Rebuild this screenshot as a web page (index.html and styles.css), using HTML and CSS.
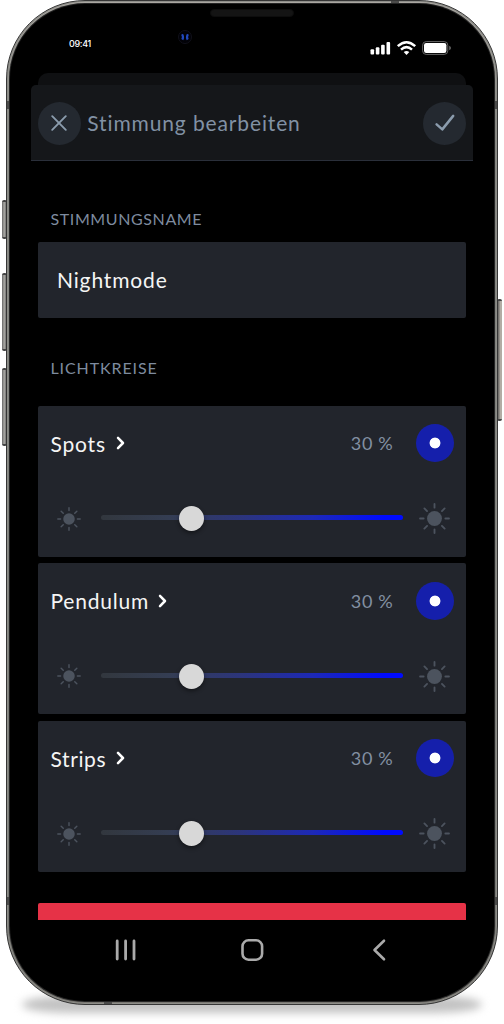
FILE: index.html
```html
<!DOCTYPE html>
<html lang="de">
<head>
<meta charset="utf-8">
<title>Stimmung bearbeiten</title>
<link rel="stylesheet" href="styles.css">
</head>
<body>
<svg width="0" height="0" class="defs">
  <symbol id="sun" viewBox="-15 -15 30 30">
    <circle r="7.2" fill="currentColor"/>
    <g stroke="currentColor" stroke-width="1.8" stroke-linecap="round">
      <path d="M0-10.5V-14M0 10.5V14M-10.5 0H-14M10.5 0H14M-7.2-7.2L-9.8-9.8M7.2-7.2L9.8-9.8M-7.2 7.2L-9.8 9.8M7.2 7.2L9.8 9.8"/>
    </g>
  </symbol>
  <symbol id="chevron" viewBox="0 0 10 14">
    <path d="M2 1.9L7 7L2 12.1" fill="none" stroke="currentColor" stroke-width="2.5" stroke-linecap="round" stroke-linejoin="round"/>
  </symbol>
</svg>
<div class="stage">
  <div class="floor-shadow"></div>
  <i class="key key-left key-mute"></i>
  <i class="key key-left key-up"></i>
  <i class="key key-left key-down"></i>
  <i class="key key-right"></i>
  <div class="phone">
    <i class="band band-tl"></i><i class="band band-tr"></i><i class="band band-bl"></i><i class="band band-br"></i>
    <i class="band-v band-top"></i><i class="band-v band-bottom"></i>
    <div class="screen">
      <i class="speaker"></i>
      <svg class="camera" viewBox="0 0 14 14"><circle cx="7" cy="7" r="6.5" fill="#020207" stroke="#10101a"/><path d="M4.1 4.2Q5.8 7 4.3 9.6M9.9 4.2Q8.2 7 9.7 9.6" fill="none" stroke="#2148bd" stroke-width="2.2"/></svg>
      <div class="status">
        <span class="time">09:41</span>
        <svg class="signals" width="82" height="16" viewBox="0 0 82 16">
          <g fill="#fff">
            <rect x="0.5" y="9.2" width="3.6" height="5.3" rx="1"/><rect x="5.8" y="7.2" width="3.6" height="7.3" rx="1"/><rect x="11.1" y="4.8" width="3.6" height="9.7" rx="1"/><rect x="16.5" y="2" width="3.6" height="12.5" rx="1"/>
          </g>
          <g fill="none" stroke="#fff" stroke-width="2.5"><path d="M27.8 6.2Q36.5-1.8 45.2 6.2"/><path d="M31 9.6Q36.5 4.6 42 9.6"/></g>
          <path d="M33.7 12.1Q36.5 9.7 39.3 12.1L36.5 15Z" fill="#fff"/>
          <rect x="52.6" y="1.6" width="25.2" height="12.8" rx="3.6" fill="none" stroke="#666"/>
          <rect x="54" y="3" width="22.4" height="10" rx="2.2" fill="#fff"/>
          <path d="M79.2 5.8Q81 6.5 81 8T79.2 10.2Z" fill="#666"/>
        </svg>
      </div>
      <div class="sheet-behind"></div>
      <header class="header">
        <button class="round"><svg width="18" height="18" viewBox="0 0 18 18"><path d="M2.2 2.2L15.8 15.8M15.8 2.2L2.2 15.8" stroke="#8b9cad" stroke-width="1.9" stroke-linecap="round"/></svg></button>
        <h1 class="title">Stimmung bearbeiten</h1>
        <button class="round"><svg width="22" height="20" viewBox="0 0 22 20"><path d="M2.6 11.4L8.3 16.4L19.2 2.9" fill="none" stroke="#8b9cad" stroke-width="2.5" stroke-linecap="round" stroke-linejoin="round"/></svg></button>
      </header>
      <main class="content">
        <h2 class="label label-name">Stimmungsname</h2>
        <div class="field">Nightmode</div>
        <h2 class="label label-circuits">Lichtkreise</h2>
        <div class="cards">
          <section class="card">
            <div class="row"><span class="name spots">Spots</span><svg class="chev"><use href="#chevron"/></svg><span class="value">30 %</span><span class="dot"></span></div>
            <div class="slider"><svg class="sun-small"><use href="#sun"/></svg><div class="track"><i class="thumb"></i></div><svg class="sun-large"><use href="#sun"/></svg></div>
          </section>
          <section class="card">
            <div class="row"><span class="name pendulum">Pendulum</span><svg class="chev"><use href="#chevron"/></svg><span class="value">30 %</span><span class="dot"></span></div>
            <div class="slider"><svg class="sun-small"><use href="#sun"/></svg><div class="track"><i class="thumb"></i></div><svg class="sun-large"><use href="#sun"/></svg></div>
          </section>
          <section class="card">
            <div class="row"><span class="name strips">Strips</span><svg class="chev"><use href="#chevron"/></svg><span class="value">30 %</span><span class="dot"></span></div>
            <div class="slider"><svg class="sun-small"><use href="#sun"/></svg><div class="track"><i class="thumb"></i></div><svg class="sun-large"><use href="#sun"/></svg></div>
          </section>
        </div>
        <div class="danger"></div>
      </main>
      <nav class="nav">
        <svg width="24" height="24" viewBox="0 0 24 24"><path d="M3.2 3V21M11.6 3V21M20 3V21" stroke="#aaa" stroke-width="2.8" stroke-linecap="round"/></svg>
        <svg width="24" height="24" viewBox="0 0 24 24"><rect x="2.5" y="2.3" width="19.6" height="19.4" rx="6" fill="none" stroke="#aaa" stroke-width="2.6"/></svg>
        <svg width="24" height="24" viewBox="0 0 24 24"><path d="M17 2.7L7.5 12L17 21.3" fill="none" stroke="#aaa" stroke-width="2.6" stroke-linecap="round" stroke-linejoin="round"/></svg>
      </nav>
    </div>
  </div>
</div>
</body>
</html>
```
FILE: styles.css
```css
* { box-sizing: border-box; }
body { margin: 0; background: #fff; font-family: Lato, "Open Sans", sans-serif; overflow: hidden; }
h1, h2 { margin: 0; font-weight: 400; }
button { border: 0; padding: 0; }
svg { display: block; flex: none; }
.defs { position: absolute; }
.stage { position: relative; width: 504px; height: 1024px; padding: 0 6px; overflow: hidden; }
.floor-shadow { position: absolute; left: 22px; top: 996px; width: 460px; height: 17px; border-radius: 50px / 9px; background: #c2c2c2; filter: blur(4px); }

.phone { position: relative; width: 492px; height: 1005px; padding: 4px; border-radius: 79px; border: 1px solid #353535; background: linear-gradient(180deg, #aaa7a2 0, #858681 12%, #777975 85%, #777570 100%); box-shadow: inset 0 0 0 1px #8d8d88; }
.screen { position: relative; display: flex; flex-direction: column; height: 997px; margin: -1px; border-radius: 75px; background: #000; box-shadow: 0 0 0 1px #242424; overflow: hidden; }
.band, .band-v { position: absolute; background: #4b4b4a; }
.band { width: 4px; height: 8px; }
.band-tl { left: 0; top: 100px; }
.band-tr { right: 0; top: 100px; }
.band-bl { left: 0; top: 896px; }
.band-br { right: 0; top: 896px; }
.band-v { width: 8px; height: 4px; }
.band-top { left: 384px; top: 0; }
.band-bottom { left: 97px; bottom: 0; }

.key { position: absolute; width: 5px; border-radius: 2px; background: linear-gradient(90deg, #666 0, #aaa9a5 45%, #555 100%); border: solid #444; border-width: 2px 0; }
.key-left { left: 2px; }
.key-mute { top: 200px; height: 39px; }
.key-up { top: 273px; height: 78px; }
.key-down { top: 368px; height: 78px; }
.key-right { left: 497px; top: 299px; height: 122px; background: linear-gradient(90deg, #444, #b2aca4 70%); }

.speaker { position: absolute; left: 200px; top: 5px; width: 84px; height: 8px; border-radius: 4px; background: #141414; border: 1px solid #0d0d0d; }
.camera { position: absolute; left: 168px; top: 26px; width: 14px; height: 14px; }

.status { display: flex; justify-content: space-between; height: 69px; padding: 36px 42.5px 0 59px; }
.time { color: #fff; font: 500 9px/8px Inter, sans-serif; letter-spacing: -.35px; }
.sheet-behind { height: 12px; margin: 0 28px; border-radius: 10px 10px 0 0; background: #0f1012; }
.header { display: flex; align-items: center; height: 76px; margin: 0 21px; padding: 1px 7px 0; border-radius: 5px 5px 0 0; background: #15171a; border-bottom: 1px solid #2a2f3a; }
.round { display: flex; align-items: center; justify-content: center; width: 43px; height: 43px; border-radius: 50%; background: #242930; }
.header .round:first-child { margin-left: -.5px; }
.title { flex: 1; margin-left: 6.8px; padding-bottom: 1px; color: #8191a4; font-size: 21px; letter-spacing: .87px; }

.content { padding: 0 28px; }
.label { padding-left: 12.5px; color: #7e8b9f; font-size: 16px; line-height: 20px; letter-spacing: .6px; text-transform: uppercase; }
.label-name { margin-top: 48px; }
.field { display: flex; align-items: center; height: 76px; margin-top: 13px; padding: 0 0 2px 19px; border-radius: 2px; background: #22252c; color: #f5f5f5; font-size: 21px; letter-spacing: .85px; }
.label-circuits { margin-top: 40px; letter-spacing: .9px; }
.cards { display: grid; grid-auto-rows: 151px; gap: 6.5px; margin-top: 27.5px; }
.card { border-radius: 2px; background: #22252c; }
.row { display: flex; align-items: center; height: 75.5px; padding: 0 12.5px 0 12.5px; }
.name { color: #f5f5f5; font-size: 21px; letter-spacing: .8px; }
.strips { letter-spacing: .6px; }
.chev { width: 10px; height: 14px; margin-left: 10px; color: #fff; }
.pendulum + .chev { margin-left: 9px; }
.value { margin-left: auto; color: #8290a2; font-size: 18px; letter-spacing: .7px; }
.dot { width: 38px; height: 38px; margin-left: 22px; border-radius: 50%; background: radial-gradient(circle, #fff 5px, #151fab 5.8px); }
.slider { display: flex; align-items: center; height: 75.5px; padding: 0 16px 0 19px; color: #4c535e; }
.sun-small { width: 24px; height: 24px; }
.sun-large { width: 31px; height: 31px; }
.track { position: relative; flex: 1; height: 5px; margin: 0 16px 2px 20px; border-radius: 3px; background: linear-gradient(90deg, #32373e 0, #343d52 22%, #2c357b 46%, #1d29b6 70%, #000bff 94%); }
.thumb { position: absolute; left: 78px; top: -9px; width: 25px; height: 25px; border-radius: 50%; background: #d8d8d8; box-shadow: 0 2px 4px rgba(0,0,0,.45); }
.danger { height: 17px; margin-top: 31.5px; border-radius: 2px 2px 0 0; background: #e63247; }

.nav { display: flex; justify-content: space-between; margin-top: 17.5px; padding: 0 103.5px; }
```
